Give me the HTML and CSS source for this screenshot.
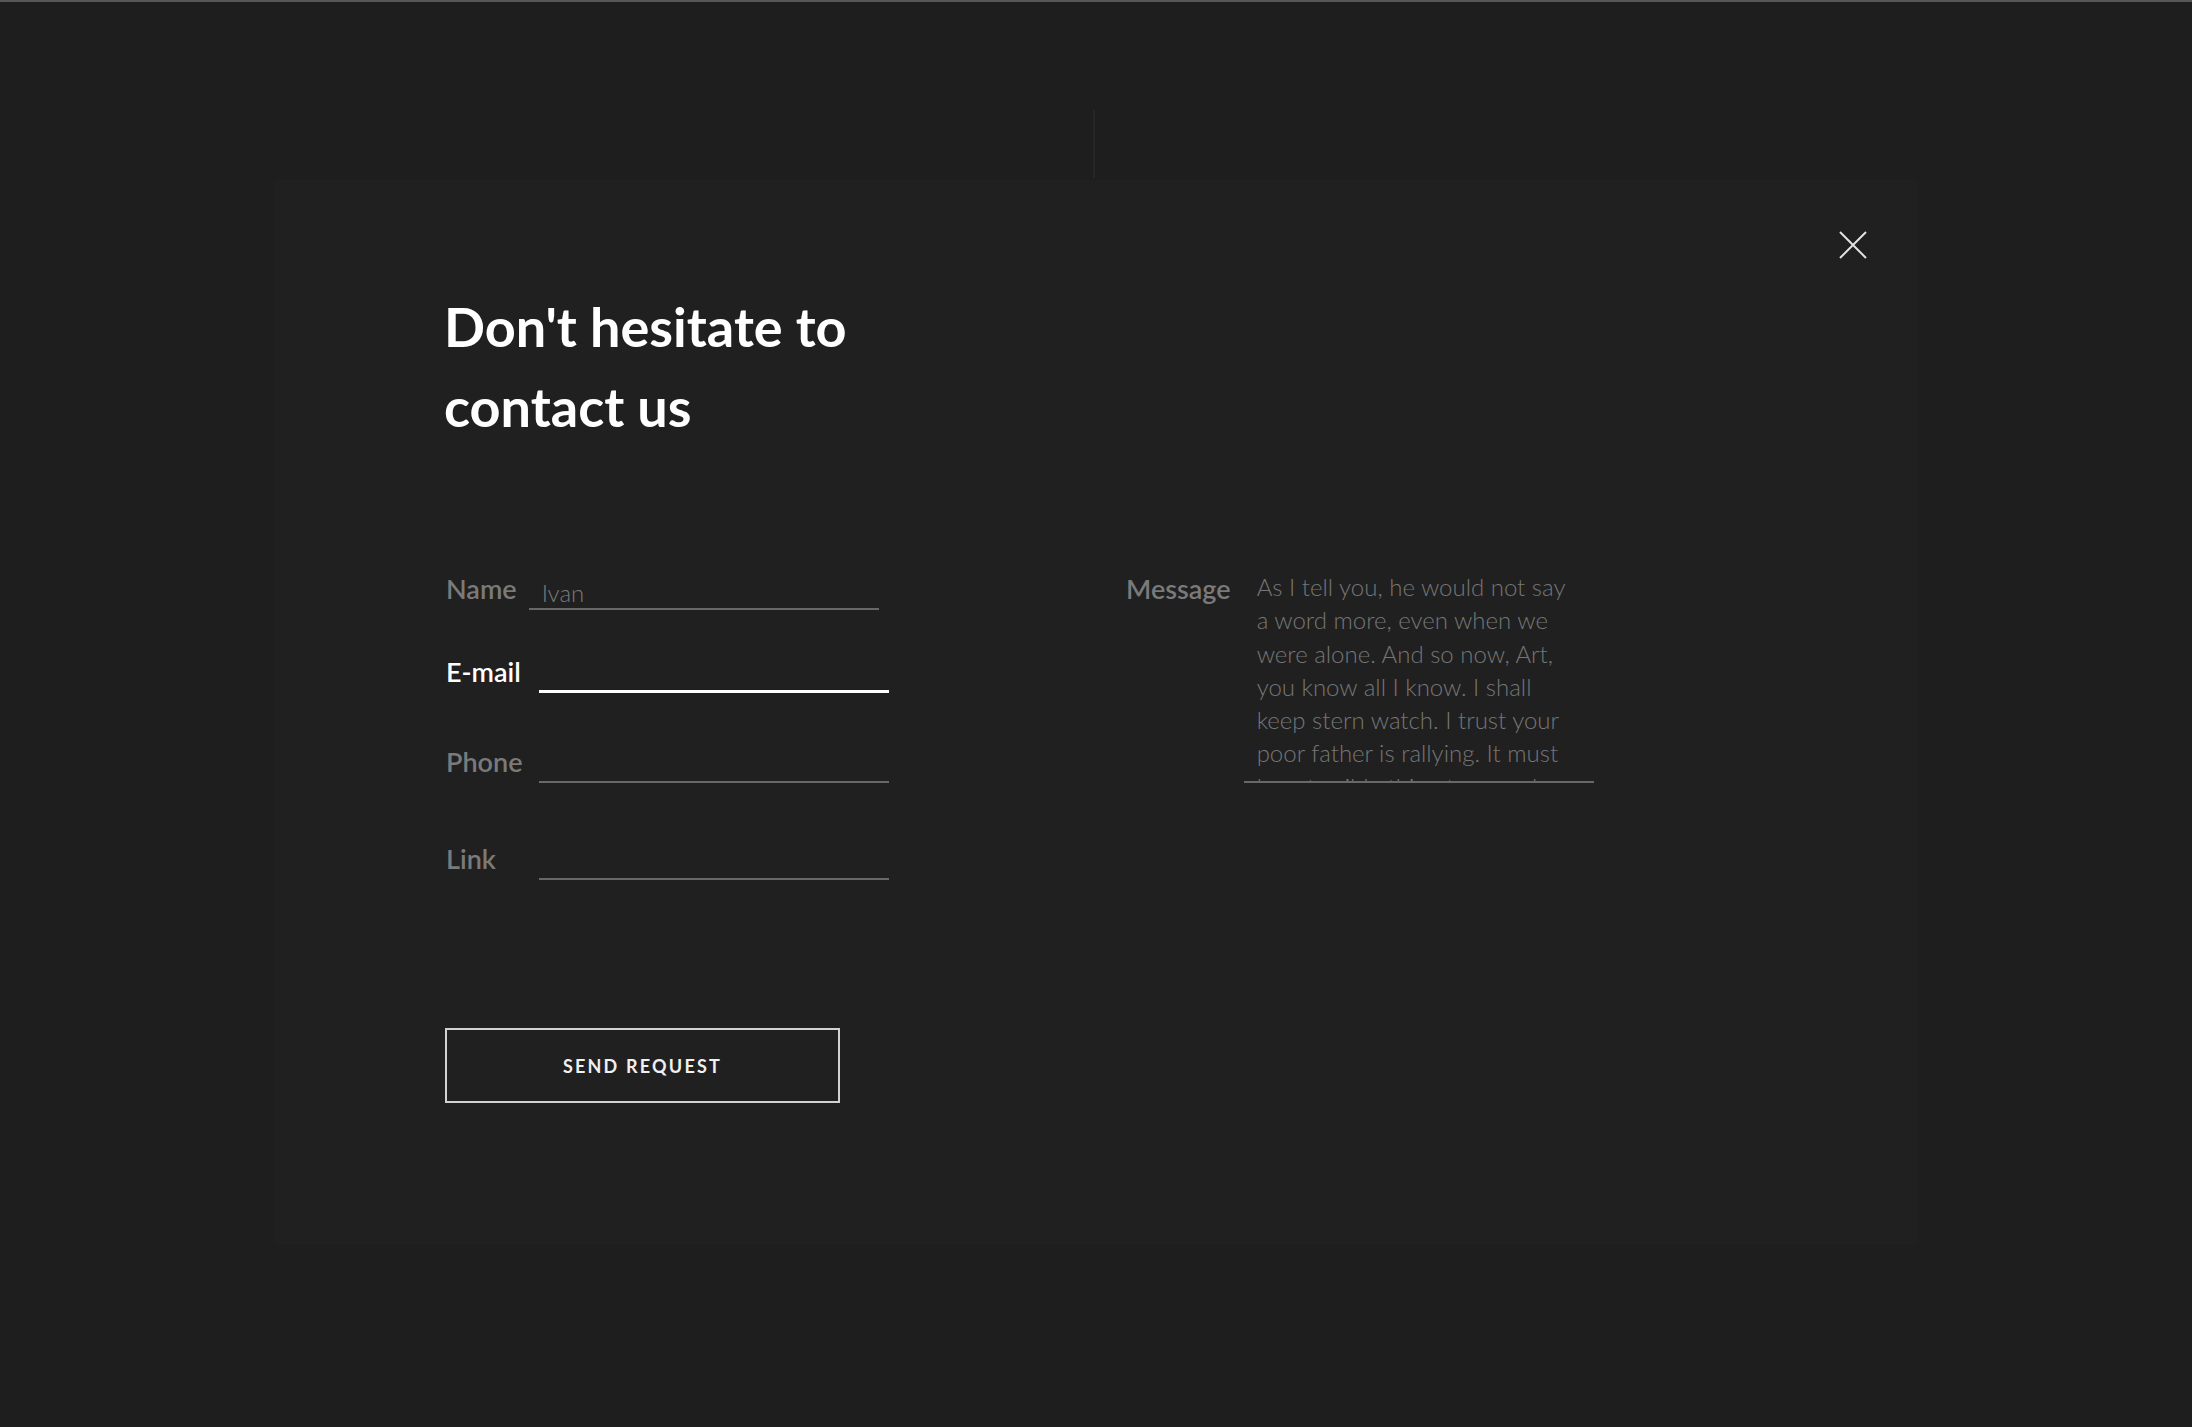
FILE: index.html
```html
<!DOCTYPE html>
<html lang="en">
<head>
    <meta charset="UTF-8">
    <meta name="viewport" content="width=device-width, initial-scale=1.0">
    <title>Contact us</title>
    <link rel="stylesheet" href="styles.css">
</head>
<body>
    <div class="overlay">
        <section class="modal">
            <div class="modal-head">
                <h1 class="title">Don't hesitate to<br>contact us</h1>
                <button class="close" type="button" aria-label="Close">
                    <svg width="28" height="28" viewBox="0 0 28 28">
                        <path d="M1 1 L27 27 M27 1 L1 27" stroke="#e2e2e2" stroke-width="2" fill="none"/>
                    </svg>
                </button>
            </div>

            <!-- contact form -->
            <form class="contact-form">
                <div class="form-cols">
                    <div class="col">
                        <div class="field field-compact">
                            <label for="name">Name</label>
                            <input type="text" id="name" value="Ivan">
                        </div>
                        <div class="field is-active">
                            <label for="email">E-mail</label>
                            <input type="text" id="email">
                        </div>
                        <div class="field">
                            <label for="phone">Phone</label>
                            <input type="text" id="phone">
                        </div>
                        <div class="field">
                            <label for="link">Link</label>
                            <input type="text" id="link">
                        </div>
                    </div>
                    <div class="col col-message">
                        <div class="field field-message">
                            <label for="message">Message</label>
                            <textarea id="message" wrap="off">As I tell you, he would not say
a word more, even when we
were alone. And so now, Art,
you know all I know. I shall
keep stern watch. I trust your
poor father is rallying. It must
be a terrible thing to you, dear</textarea>
                        </div>
                    </div>
                </div>
                <button class="send" type="submit">SEND REQUEST</button>
            </form>
        </section>
    </div>
</body>
</html>
```

FILE: styles.css
```css
body {
    margin: 0;
    min-height: 1425px;
    border-top: 2px solid #565656;
    background-color: #1e1e1e;
    background-image: linear-gradient(to right, transparent 1093px, #262626 1093px, #262626 1095px, transparent 1095px);
    background-size: 100% 68px;
    background-position: 0 110px;
    background-repeat: no-repeat;
    font-family: Lato, "Open Sans", sans-serif;
    color: #fff;
}

.overlay {
    padding-top: 178px;
}

.modal {
    margin: 0 274px;
    height: 1064px;
    padding: 52px 51px 0 174px;
    background: #202020;
    box-sizing: border-box;
}

.modal-head {
    display: flex;
    justify-content: space-between;
    align-items: flex-start;
}

.title {
    margin: 55px 0 0 -4px;
    font-size: 54px;
    line-height: 80px;
    font-weight: 700;
    color: #fff;
}

.close {
    width: 28px;
    height: 28px;
    padding: 0;
    margin-top: -1px;
    border: none;
    background: none;
    cursor: pointer;
}

.contact-form {
    margin-top: 73px;
}

.form-cols {
    display: flex;
}

.col {
    width: 682px;
    margin-left: -2px;
}

.col-message {
    padding-top: 52px;
}

.field {
    display: flex;
    align-items: flex-end;
    height: 90px;
}

/* rows are not evenly spaced in the design */
.field:nth-child(2) {
    height: 83px;
}

.field:nth-child(4) {
    height: 97px;
}

.field label {
    min-width: 93px;
    padding-bottom: 4px;
    font-size: 27px;
    line-height: 34px;
    font-weight: 600;
    color: #7a7a7a;
}

.field-compact label {
    min-width: 0;
    margin-right: 12px;
}

.field input {
    width: 350px;
    height: 34px;
    padding: 0 13px;
    box-sizing: border-box;
    border: none;
    border-bottom: 2px solid #686868;
    background: transparent;
    font-family: Lato, "Open Sans", sans-serif;
    font-size: 24px;
    font-weight: 300;
    color: #7a7a7a;
    outline: none;
}

.is-active label {
    color: #fff;
}

.is-active input {
    border-bottom: 3px solid #fff;
}

.field-message {
    align-items: flex-start;
    height: auto;
}

.field-message label {
    min-width: 0;
    padding: 0;
    margin-right: 13px;
}

.field-message textarea {
    width: 350px;
    height: 213px;
    padding: 0 13px;
    box-sizing: border-box;
    border: none;
    border-bottom: 2px solid #686868;
    background: transparent;
    font-family: Lato, "Open Sans", sans-serif;
    font-size: 24px;
    line-height: 33.3px;
    font-weight: 300;
    color: #767676;
    resize: none;
    overflow: hidden;
    outline: none;
    margin-top: -2px;
}

.send {
    display: block;
    width: 395px;
    height: 75px;
    margin: 148px 0 0 -3px;
    border: 2px solid #d2d2d2;
    background: transparent;
    font-family: Lato, "Open Sans", sans-serif;
    font-size: 18px;
    font-weight: 700;
    letter-spacing: 2.2px;
    color: #f0f0f0;
    cursor: pointer;
}
```
